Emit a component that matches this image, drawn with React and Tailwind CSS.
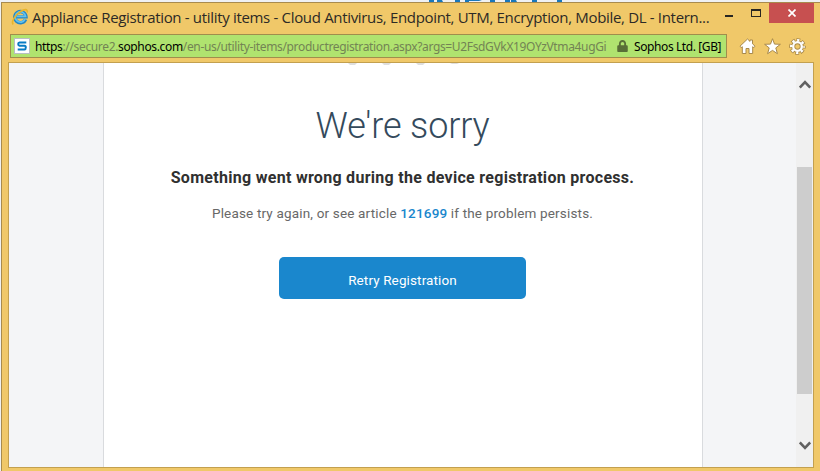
import { FaLock } from "react-icons/fa";

function IeLogo() {
    return (
        <svg width="18" height="18" viewBox="0 0 18 18" fill="none" className="shrink-0">
            <path d="M14.6 11.3A5.6 5.6 0 1 1 15 8.9H5.6" stroke="#2487c4" strokeWidth="3.4" />
            <path d="M14.1 11.2A5.2 5.2 0 1 1 14.6 8.4H5.6" stroke="#63c1ee" strokeWidth="1.7" />
            <path d="M2.3 16.3C-.2 14.2 3.8 7.2 9.3 3.7C13.4 1 16.9.7 16.2 4.5" stroke="#e9b52b" strokeWidth="1.6" />
        </svg>
    );
}

function SophosIcon() {
    return (
        <div className="flex h-4 w-4 shrink-0 items-center justify-center border border-[#b9bfc3] bg-white">
            <svg width="10" height="10" viewBox="0 0 10 10" fill="none">
                <path d="M9.3 1.5H2.5Q1.2 1.5 1.2 3T2.5 4.8H7.5Q8.8 4.8 8.8 6.6T7.5 8.5H.7" stroke="#087bc3" strokeWidth="2" />
            </svg>
        </div>
    );
}

function ToolIcons() {
    return (
        <div className="flex items-center gap-[8px]">
            <svg width="17" height="17" viewBox="0 0 17 17" fill="#fff" stroke="#a8894b" strokeWidth="1">
                <path d="M1 8.2L8.5 1L11 3.4V2H13.5V5.8L16 8.2L14.8 9.7L13.7 8.7V15.5H10V10.5H7V15.5H3.3V8.7L2.2 9.7Z" />
            </svg>
            <svg width="17" height="17" viewBox="0 0 17 17" fill="#fff" stroke="#a8894b" strokeWidth="1">
                <path d="M8.5.7L10.5 6.1L16.4 6.3L11.8 9.9L13.4 15.7L8.5 12.4L3.6 15.7L5.2 9.9L.6 6.3L6.5 6.1Z" />
            </svg>
            <svg width="17" height="17" viewBox="0 0 17 17" fill="none">
                <circle cx="8.5" cy="8.5" r="6.3" stroke="#a8894b" strokeWidth="4" strokeDasharray="3.45 1.5" strokeDashoffset="1.7" />
                <circle cx="8.5" cy="8.5" r="4.3" stroke="#a8894b" strokeWidth="4" />
                <circle cx="8.5" cy="8.5" r="6.3" stroke="#fff" strokeWidth="2.4" strokeDasharray="2.3 2.65" strokeDashoffset="1.15" />
                <circle cx="8.5" cy="8.5" r="4.3" stroke="#fff" strokeWidth="2.3" />
            </svg>
        </div>
    );
}

function TitleBar() {
    return (
        <div className="flex h-[31px] shrink-0 items-start">
            <div className="flex w-[710px] items-center pl-[9px] pt-[2px]">
                <IeLogo />
                <h1 className="ml-[3px] whitespace-nowrap font-['Open_Sans',sans-serif] text-[15px] leading-6 tracking-[-0.325px] text-[#2c2a26]">
                    Appliance Registration - utility items - Cloud Antivirus, Endpoint, UTM, Encryption, Mobile, DL - Intern...
                </h1>
            </div>
            <div className="ml-[13px] mt-[12px] h-[2px] w-[8px] bg-[#282622]"></div>
            <div className="ml-[18px] mt-[6px] h-[8px] w-[10px] border border-t-2 border-[#282622]"></div>
            <button className="ml-auto mr-[6px] flex h-5 w-[45px] items-center justify-center bg-[#c75050]">
                <svg width="8" height="8" viewBox="0 0 8 8" stroke="#fff" strokeWidth="1.7">
                    <path d="M.5.5L7.5 7.5M7.5.5L.5 7.5" />
                </svg>
            </button>
        </div>
    );
}

function AddressBar() {
    return (
        <div className="flex h-[24px] shrink-0 items-center pl-[8px]">
            <div className="flex h-[24px] w-[717px] items-center whitespace-nowrap border border-[#a08e4c] bg-[#b0e36f] pl-[3px] font-['Noto_Sans',sans-serif] text-[12px] text-[#738454]">
                <SophosIcon />
                <p className="ml-[5px] mt-px w-[573px] shrink-0 tracking-[-0.35px]">
                    <span className="text-black">https</span>://secure2.<span className="text-black">sophos.com</span>/en-us/utility-items/productregistration.aspx?args=U2FsdGVkX19OYzVtma4ugGi
                </p>
                <FaLock className="ml-[9px] h-[12px] w-[11px] shrink-0 text-[#596e37]" />
                <span className="ml-[6px] mt-px tracking-[-0.4px] text-black">Sophos Ltd. [GB]</span>
            </div>
            <div className="ml-[12px]">
                <ToolIcons />
            </div>
        </div>
    );
}

function ScrollBar() {
    return (
        <div className="flex w-[17px] shrink-0 flex-col items-center bg-[#f0f0f0] text-[#606060]">
            <div className="flex h-[104px] pt-[17px]">
                <svg width="12" height="9" viewBox="0 0 12 9" fill="none" stroke="currentColor" strokeWidth="2.6">
                    <path d="M.8 7.5L6 2.2L11.2 7.5" />
                </svg>
            </div>
            <div className="h-[227px] w-[15px] bg-[#cdcdcd]"></div>
            <div className="mt-[47px]">
                <svg width="12" height="9" viewBox="0 0 12 9" fill="none" stroke="currentColor" strokeWidth="2.6">
                    <path d="M.8 1.5L6 6.8L11.2 1.5" />
                </svg>
            </div>
        </div>
    );
}

export default function App() {
    return (
        <div className="flex h-[471px] w-[820px] flex-col overflow-hidden bg-[#f0f1f2]">
            <svg width="820" height="2" viewBox="0 0 820 2" className="shrink-0" fill="#1978bb">
                <path d="M429 0h5v2h-5zM437 0h5l1 2h-6zM455 0h5v2h-5zM465 0h17l-3 1h-10v1h-4zM490 0h5v2h-5zM505 0h5v2h-5zM511 0h5l1 2h-6zM532 0h5v2h-5zM557 0h5v2h-5z" />
            </svg>
            <div className="ml-px flex flex-1 flex-col border-l border-t border-[#a88b4e] bg-[#f0c869]">
                <TitleBar />
                <AddressBar />
                <div className="ml-[6px] mt-[4px] flex h-[406px] w-[806px] shrink-0 border border-[#c3a04f] bg-[#f4f5f7]">
                    <div className="w-[94px] shrink-0"></div>
                    <main className="flex w-[600px] shrink-0 flex-col items-center border-x border-[#d9dbde] bg-white pr-px font-[Roboto,sans-serif]">
                        <svg width="120" height="2" viewBox="0 0 120 2" fill="#dedede" className="shrink-0">
                            <path d="M5 0h9l-2 2H7zM39 0h9l-2 2h-5zM73 0h9l-2 2h-5zM107 0h9l-2 1h-5z" />
                        </svg>
                        <h2 className="mt-[37px] whitespace-nowrap text-[36px] font-light leading-[48px] tracking-[-0.15px] text-[#344a5c]">
                            We're sorry
                        </h2>
                        <p className="mt-[16px] whitespace-nowrap text-base font-bold leading-6 tracking-[0.29px] text-[#303030]">
                            Something went wrong during the device registration process.
                        </p>
                        <p className="mt-[13px] whitespace-nowrap text-[13.5px] leading-5 tracking-[0.17px] text-[#686868]">
                            Please try again, or see article <a href="#" className="font-medium text-[#1a87cd]">121699</a> if the problem persists.
                        </p>
                        <button className="mt-[34px] h-[42px] w-[247px] shrink-0 rounded-[5px] bg-[#1a87cd] pt-[5px] text-[13.5px] tracking-[0.12px] text-white">
                            Retry Registration
                        </button>
                    </main>
                    <div className="flex-1"></div>
                    <ScrollBar />
                </div>
            </div>
        </div>
    );
}
